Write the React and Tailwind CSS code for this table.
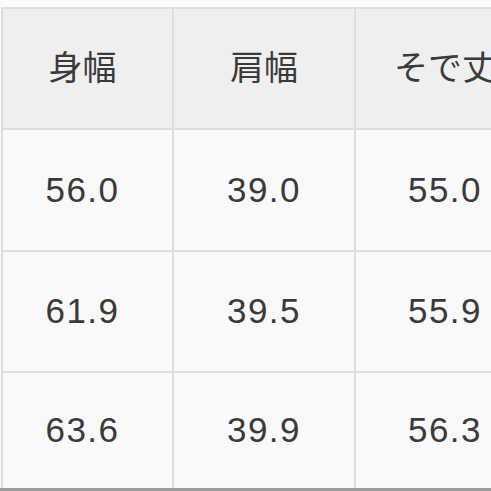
const header = ['身幅', '肩幅', 'そで丈']
const rows = [
  ['56.0', '39.0', '55.0'],
  ['61.9', '39.5', '55.9'],
  ['63.6', '39.9', '56.3'],
]

const font = { fontFamily: '"Liberation Sans", "Noto Sans CJK JP", sans-serif' }

export default function App() {
  return (
    <div className="w-[491px] h-[491px] overflow-hidden bg-[#fbfbfb] pt-[7px]" style={font}>
      <div className="w-[560px] ml-[1px] bg-[#dedede] pl-[2px] pt-[2px] grid grid-cols-[169px_180px_180px] grid-rows-[119px_120px_119px_115px] gap-[2px]">
        {header.map((h, i) => (
          <div
            key={h}
            className={`bg-[#efefef] flex items-center justify-center text-[34px] text-[#3a3a3a] whitespace-nowrap ${i === 0 ? 'pr-[10px]' : ''} ${i === 2 ? 'pr-[2px]' : ''}`}
          >
            {h}
          </div>
        ))}
        {rows.map((r) =>
          r.map((v, i) => (
            <div
              key={v + i}
              className={`bg-[#f9f9f9] flex items-center justify-center text-[35px] tracking-[1.5px] text-[#3a3a3a] ${i === 0 ? 'pr-[10px]' : ''} ${i === 2 ? 'pr-[2px]' : ''}`}
            >
              {v}
            </div>
          ))
        )}
      </div>
      <div className="h-[3px] bg-[#9c9c9c]" />
    </div>
  )
}
